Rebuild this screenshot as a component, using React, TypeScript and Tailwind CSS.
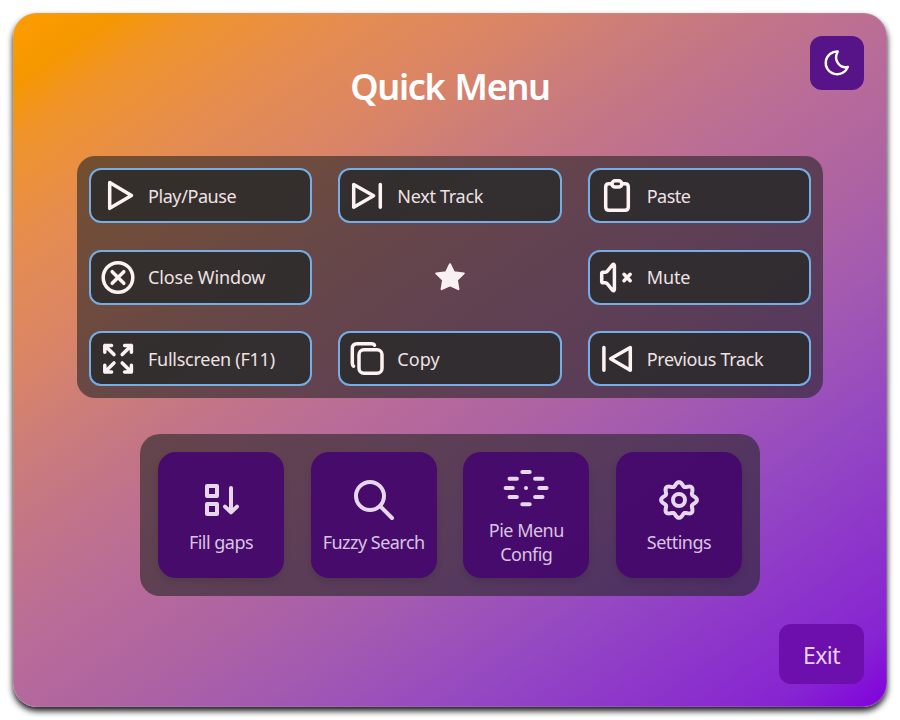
import React from "react";

type IconProps = { children: React.ReactNode };

function ActionIcon({ children }: IconProps) {
  return (
    <svg
      className="shrink-0"
      width="36"
      height="35"
      viewBox="0 0 36 35"
      fill="none"
      stroke="#fdf3f2"
      strokeWidth="3.5"
      strokeLinecap="round"
      strokeLinejoin="round"
    >
      {children}
    </svg>
  );
}

function ToolIcon({ children }: IconProps) {
  return (
    <svg
      className="shrink-0"
      width="48"
      height="48"
      viewBox="0 0 48 48"
      fill="none"
      stroke="#e6d7ea"
      strokeWidth="4"
      strokeLinecap="round"
      strokeLinejoin="round"
    >
      {children}
    </svg>
  );
}

// Closed outline with eight soft teeth, one of them pointing straight up.
const gearOutline =
  Array.from({ length: 144 }, (_, i) => {
    const t = (i / 144) * Math.PI * 2;
    const r = 16 + 1.9 * Math.cos(8 * t);
    const x = (24 + r * Math.sin(t)).toFixed(2);
    const y = (24 - r * Math.cos(t)).toFixed(2);
    return `${i ? "L" : "M"}${x} ${y}`;
  }).join("") + "Z";

const actions: { label: string; tracking: string; icon: React.ReactNode }[] = [
  {
    label: "Play/Pause",
    tracking: "tracking-[-0.42px]",
    icon: <path d="M9.7 4.5 31.5 17.4 9.7 30.3Z" />,
  },
  {
    label: "Next Track",
    tracking: "tracking-[-0.3px]",
    icon: <path d="M4.7 6.4 24.6 17.7 4.7 29.2ZM31.3 6.4V29.2" />,
  },
  {
    label: "Paste",
    tracking: "tracking-[-0.5px]",
    icon: (
      <>
        <path d="M13 5.8H10Q6.7 5.8 6.7 9V29Q6.7 32.2 10 32.2H26Q29.3 32.2 29.3 29V9Q29.3 5.8 26 5.8H23" />
        <rect x="13" y="2.7" width="9.8" height="6.4" rx="3.2" />
      </>
    ),
  },
  {
    label: "Close Window",
    tracking: "-mt-0.5 tracking-[-0.1px]",
    icon: (
      <>
        <circle cx="18" cy="17.5" r="14.8" />
        <path d="M12.2 11.7 23.8 23.3M23.8 11.7 12.2 23.3" />
      </>
    ),
  },
  { label: "", tracking: "", icon: null },
  {
    label: "Mute",
    tracking: "-mt-0.5 tracking-[-0.1px]",
    icon: (
      <>
        <path d="M2.7 13.6Q2.7 12.2 4 12.2H6.2Q7.6 12.2 8.4 11.1L13.3 5Q15.4 3 15.4 6V29Q15.4 32 13.3 30L8.4 23.9Q7.6 22.8 6.2 22.8H4Q2.7 22.8 2.7 21.4Z" />
        <path d="M25 14.3 31.2 20.7M31.2 14.3 25 20.7" />
      </>
    ),
  },
  {
    label: "Fullscreen (F11)",
    tracking: "tracking-[-0.26px]",
    icon: (
      <path d="M4.8 11.3V4.5H11.6M4.8 4.5 14 13.6M24.6 4.5H31.4V11.3M31.4 4.5 22.2 13.6M4.8 24.2V31H11.6M4.8 31 14 21.9M24.6 31H31.4V24.2M31.4 31 22.2 21.9" />
    ),
  },
  {
    label: "Copy",
    tracking: "tracking-[0.05px]",
    icon: (
      <>
        <rect x="10" y="8.7" width="23" height="23.6" rx="5" />
        <path d="M25.5 4.3Q25 2.7 22.5 2.7H8Q3.3 2.7 3.3 7.5V22Q3.3 24.4 4.6 25.2" />
      </>
    ),
  },
  {
    label: "Previous Track",
    tracking: "tracking-[-0.34px]",
    icon: <path d="M31.3 6.4 11.6 17.7 31.3 29.2ZM4.9 6.4V29.2" />,
  },
];

const tools: { label: string; icon: React.ReactNode }[] = [
  {
    label: "Fill gaps",
    icon: (
      <>
        <path d="M10 10H20V20H10ZM10 28H20V38H10Z" />
        <path d="M34 12V36M28 30.6 34 36.4 40 30.6" />
      </>
    ),
  },
  {
    label: "Fuzzy Search",
    icon: (
      <>
        <circle cx="20" cy="20" r="14" />
        <path d="M30.4 30.4 42 42" />
      </>
    ),
  },
  {
    label: "Pie Menu Config",
    icon: (
      <path d="M20.3 8H27.7M7.5 14.8H14.9M33.1 14.8H40.5M3.6 24H10.8M37.3 24H44.6M24 24H24.01M7.5 33.1H14.9M33.1 33.1H40.5M20.3 40.3H27.7" />
    ),
  },
  {
    label: "Settings",
    icon: (
      <>
        <path d={gearOutline} />
        <circle cx="24" cy="24" r="6" />
      </>
    ),
  },
];

function StarMark() {
  return (
    <svg width="32" height="32" viewBox="0 0 32 32" fill="#f9f0f3" stroke="#f9f0f3" strokeWidth="2" strokeLinejoin="round">
      <path d="M16 3.2 19.9 11.3 29.8 12.4 22.9 19 24.4 28.2 16 24.3 7.6 28.2 9.1 19 2.2 12.4 12.1 11.3Z" />
    </svg>
  );
}

export default function App() {
  return (
    <div className="h-[720px] w-[900px] overflow-hidden bg-white p-[13px] font-['Noto_Sans',sans-serif]">
      <div className="flex h-[694px] w-[874px] flex-col items-center rounded-[24px] bg-[linear-gradient(145deg,#ff9d00_0%,#f59700_5.5%,#f09428_9.5%,#e68d4f_18%,#d98468_28%,#cc7d79_34%,#c27488_41%,#b96c98_49%,#ae63a2_58%,#a35ab0_66%,#9448c2_77%,#8724d2_94%,#8000dc_100%)] pt-[23px] shadow-[0_4px_6px_rgba(0,0,0,0.9),inset_0_0_0_1px_rgba(170,170,170,0.25)]">
        <header className="grid h-[54px] w-full grid-cols-[54px_1fr_54px] px-[23px]">
          <span />
          <h1 className="pt-6 text-center text-[36px] leading-[54px] font-semibold tracking-[-1.3px] whitespace-nowrap text-white [word-spacing:2px]">
            Quick Menu
          </h1>
          <button className="flex h-[54px] w-[54px] items-center justify-center rounded-[12px] bg-[#571488]">
            <svg width="28" height="28" viewBox="0 0 28 28" fill="none" stroke="#fff" strokeWidth="2.4" strokeLinejoin="round">
              <path d="M14.8 2.5A11.4 11.4 0 1 0 24.8 17.9C17.6 19.5 9.6 12.2 14.8 2.5Z" />
            </svg>
          </button>
        </header>

        <section className="mt-[66px] h-[242px] w-[746px] shrink-0 rounded-[18px] bg-[#252525]/60 p-3">
          <div className="grid grid-cols-3 grid-rows-[82px_81px_55px] items-start gap-x-[26px]">
            {actions.map((a, i) =>
              a.icon ? (
                <button
                  key={i}
                  className="flex h-[55px] items-center gap-3 rounded-[12px] border-2 border-[#74aee6] bg-[#2a2a2a]/85 pl-[9px]"
                >
                  <ActionIcon>{a.icon}</ActionIcon>
                  <span className={`text-[18px] leading-6 whitespace-nowrap text-[#eee2e4] ${a.tracking}`}>{a.label}</span>
                </button>
              ) : (
                <div key={i} className="flex h-[55px] items-center justify-center pb-px">
                  <StarMark />
                </div>
              ),
            )}
          </div>
        </section>

        <section className="mt-9 flex h-[162px] w-[620px] shrink-0 justify-between rounded-[20px] bg-[#252525]/60 p-[18px]">
          {tools.map((t) => (
            <button
              key={t.label}
              className="flex h-[126px] w-[126px] flex-col items-center justify-center gap-[6px] rounded-[18px] bg-[#46086d]/95 px-2 shadow-[0_4px_6px_rgba(0,0,0,0.1)]"
            >
              <ToolIcon>{t.icon}</ToolIcon>
              <span className={`text-[18px] leading-6 tracking-[-0.52px] text-[#d8c4e1] ${t.label === "Pie Menu Config" ? "w-20" : "whitespace-nowrap"}`}>
                {t.label}
              </span>
            </button>
          ))}
        </section>

        <button className="mt-7 mr-[23px] h-[60px] w-[85px] self-end rounded-[12px] bg-[#6d0fad] pt-[3px] text-[23px] tracking-[-0.6px] text-[#e6d3f0]">
          Exit
        </button>
      </div>
    </div>
  );
}
